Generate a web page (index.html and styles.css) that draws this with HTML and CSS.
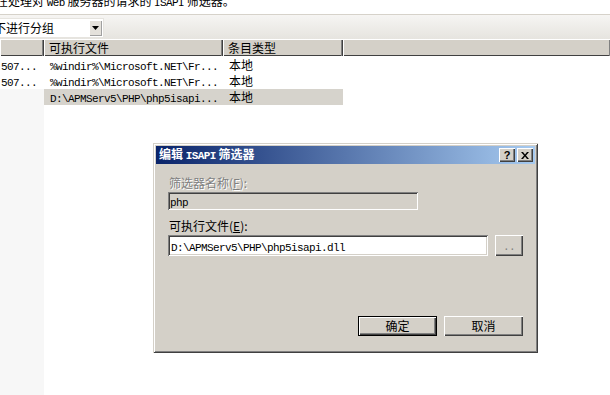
FILE: index.html
```html
<!DOCTYPE html>
<html>
<head>
<meta charset="utf-8">
<link rel="stylesheet" href="styles.css">
</head>
<body>
<div class="page">
  <div class="desc"><p>在处理对 <span class="m">Web</span> 服务器的请求的 <span class="m">ISAPI</span> 筛选器。</p></div>
  <div class="toolbar">
    <div class="combo">
      <span class="combo-text">不进行分组</span>
      <span class="combo-btn"><svg width="7" height="4" viewBox="0 0 7 4"><path d="M0 0h7L3.5 4z" fill="#000"/></svg></span>
    </div>
  </div>
  <div class="header">
    <div class="hcell c1"></div>
    <div class="hcell c2">可执行文件</div>
    <div class="hcell c3">条目类型</div>
    <div class="hcell c4"></div>
  </div>
  <div class="list">
    <div class="row">
      <div class="cell c1"><span class="m">507...</span></div>
      <div class="cell c2"><span class="m">%windir%\Microsoft.NET\Fr...</span></div>
      <div class="cell c3">本地</div>
    </div>
    <div class="row">
      <div class="cell c1"><span class="m">507...</span></div>
      <div class="cell c2"><span class="m">%windir%\Microsoft.NET\Fr...</span></div>
      <div class="cell c3">本地</div>
    </div>
    <div class="row sel">
      <div class="cell c1 gray"></div>
      <div class="cell c2"><span class="m">D:\APMServ5\PHP\php5isapi...</span></div>
      <div class="cell c3">本地</div>
    </div>
    <div class="rest"><div class="c1 gray"></div></div>
  </div>

  <div class="dialog">
    <div class="titlebar">
      <span class="title">编辑 <span class="m">ISAPI</span> 筛选器</span>
      <span class="tbtns">
        <span class="tbtn">?</span>
        <span class="tbtn x"><svg width="8" height="7" viewBox="0 0 8 7"><path d="M0 0h2l2 2.5 2-2.5h2L5 3.5 8 7H6L4 4.5 2 7H0l3-3.5z" fill="#000"/></svg></span>
      </span>
    </div>
    <div class="dbody">
      <div class="label disabled">筛选器名称(<u>F</u>):</div>
      <div class="edit edit-dis"><span class="m">php</span></div>
      <div class="label">可执行文件(<u>E</u>):</div>
      <div class="editrow">
        <div class="edit edit-main"><span class="m">D:\APMServ5\PHP\php5isapi.dll</span></div>
        <div class="btn btn-dots"><span class="m">..</span></div>
      </div>
      <div class="actions">
        <div class="btn btn-def">确定</div>
        <div class="btn">取消</div>
      </div>
    </div>
  </div>
</div>
</body>
</html>
```
FILE: styles.css
```css
* { box-sizing: border-box; }
html, body { margin: 0; padding: 0; }
body {
  width: 610px; height: 395px; overflow: hidden; background: #fff;
  font-family: "Noto Sans CJK SC", "Liberation Sans", sans-serif;
  font-size: 12px; color: #000;
}
.page { position: relative; width: 610px; height: 395px; display: flex; flex-direction: column; }
.m { font-family: "Liberation Mono", "Noto Sans CJK SC", monospace; font-size: 11px; letter-spacing: -0.6px; }

.desc { height: 14px; overflow: hidden; }
.desc p { margin: -5px 0 0 -4px; line-height: 12px; white-space: nowrap; }

.toolbar {
  height: 25px; border-top: 1px solid #d6d2ca;
  background: linear-gradient(#f6f5f3, #e6e4df);
  padding-top: 3px;
}
.combo {
  width: 104px; height: 20px; background: #fff; display: flex; align-items: center;
  border: 1px solid #e6e4df; border-left: 0;
}
.combo-text { margin-left: -6px; flex: 1; line-height: 18px; white-space: nowrap; }
.combo-btn {
  width: 13px; height: 16px; margin-right: 1px; background: #e4e1db;
  box-shadow: inset 1px 1px #fff, inset -1px -1px #a0a0a0;
  display: flex; align-items: center; justify-content: center;
}

.header {
  height: 17px; display: flex; background: #d4d0c8;
  border-bottom: 1px solid #404040; border-top: 1px solid #fff;
}
.hcell {
  height: 16px; line-height: 15px; padding-left: 5px; white-space: nowrap;
  border-right: 1px solid #404040; box-shadow: inset 1px 0 #fff, inset -1px 0 #808080;
}
.header .c4 { flex: 1; border-right: 0; }
.c1 { width: 44px; flex: none; }
.c2 { width: 179px; flex: none; }
.c3 { width: 120px; flex: none; }

.list { flex: 1; display: flex; flex-direction: column; }
.row { display: flex; height: 16px; line-height: 16px; white-space: nowrap; }
.row:first-child { margin-top: 1px; }
.cell { overflow: hidden; }
.row .c1 { padding-left: 1px; }
.row .c2 { padding-left: 6px; }
.row .c3 { padding-left: 6px; }
.row.sel .c2, .row.sel .c3 { background: #d6d3cc; }
.gray { background: #f7f7f7; }
.rest { flex: 1; display: flex; }
.rest .c1 { height: 100%; }

.dialog {
  position: absolute; left: 153px; top: 143px; width: 385px; height: 210px;
  background: #d4d0c8; padding: 3px;
  box-shadow: inset 1px 1px #d4d0c8, inset -1px -1px #404040, inset 2px 2px #fff, inset -2px -2px #808080;
  display: flex; flex-direction: column;
}
.titlebar {
  height: 18px; background: linear-gradient(90deg, #0a246a, #a6caf0);
  display: flex; align-items: center; justify-content: space-between;
  padding: 0 2px 0 3px;
}
.title { color: #fff; font-weight: bold; white-space: nowrap; line-height: 18px; }
.title .m { font-weight: bold; }
.tbtns { display: flex; gap: 2px; }
.tbtn {
  width: 16px; height: 14px; background: #d4d0c8;
  box-shadow: inset 1px 1px #fff, inset -1px -1px #404040, inset -2px -2px #808080;
  font-family: "Liberation Sans", sans-serif; font-weight: bold; font-size: 11px;
  line-height: 14px; text-align: center;
  display: flex; align-items: center; justify-content: center;
}

.dbody { padding: 13px 0 0 12px; display: flex; flex-direction: column; flex: 1; }
.label { line-height: 12px; height: 12px; padding-left: 1px; white-space: nowrap; }
.label u { text-decoration: underline; }
.disabled { color: #808080; text-shadow: 1px 1px #fff; }
.edit {
  height: 18px; padding: 2px 3px; line-height: 14px; white-space: nowrap;
  box-shadow: inset 1px 1px #808080, inset -1px -1px #fff, inset 2px 2px #404040, inset -2px -2px #d4d0c8;
}
.edit-dis { width: 250px; margin-top: 3px; margin-bottom: 10px; background: #d4d0c8; padding-left: 2px; }
.editrow { display: flex; gap: 7px; margin-top: 3px; }
.edit-main { width: 320px; height: 21px; background: #fff; line-height: 17px; }
.btn {
  width: 79px; height: 20px; background: #d4d0c8; text-align: center; line-height: 20px;
  box-shadow: inset 1px 1px #fff, inset -1px -1px #404040, inset -2px -2px #808080;
}
.btn-dots { width: 28px; height: 21px; color: #808080; line-height: 19px; }
.actions { margin-top: auto; margin-bottom: 14px; display: flex; gap: 7px; padding-left: 190px; }
.btn-def {
  box-shadow: inset 0 0 0 1px #000, inset 2px 2px #fff, inset -2px -2px #404040, inset -3px -3px #808080;
}
```
